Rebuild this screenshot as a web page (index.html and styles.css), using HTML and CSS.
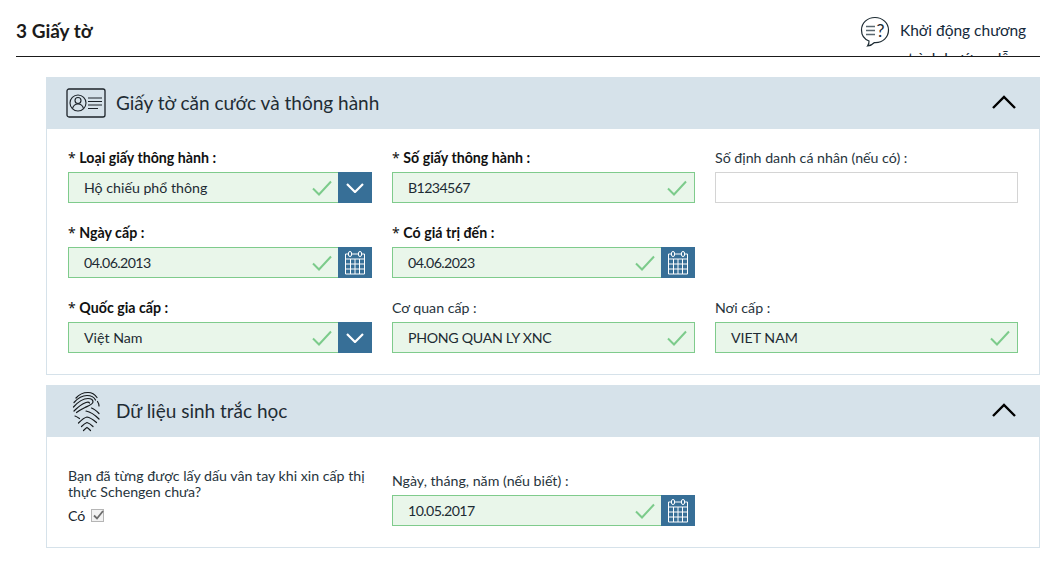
FILE: index.html
```html
<!DOCTYPE html>
<html lang="vi">
<head>
<meta charset="utf-8">
<title>3 Giấy tờ</title>
<link rel="stylesheet" href="styles.css">
</head>
<body>
<svg class="defs" width="0" height="0" aria-hidden="true">
  <defs>
    <symbol id="check" viewBox="0 0 20 16"><path d="M1 8.500l6 6L19 1.500" fill="none" stroke="#7ccb8b" stroke-width="2"/></symbol>
    <symbol id="chev" viewBox="0 0 18 10"><path d="M1 1l8 8 8-8" fill="none" stroke="#fff" stroke-width="2.200"/></symbol>
    <symbol id="cal" viewBox="0 0 22 24">
      <g fill="none" stroke="#fff" stroke-width="1">
        <path d="M4 3.500H1.500v20h19v-20H18M8 3.500h6"/>
        <path d="M1.500 8.500h19M1.500 13.500h19M1.500 18.500h19M6.500 8.500v15M11 8.500v15M15.500 8.500v15"/>
        <rect x="4.500" y="1" width="3" height="5" rx="1.500"/>
        <rect x="14.500" y="1" width="3" height="5" rx="1.500"/>
      </g>
    </symbol>
    <symbol id="up" viewBox="0 0 24 14"><path d="M1 13L12 2l11 11" fill="none" stroke="#000" stroke-width="2.400"/></symbol>
  </defs>
</svg>
<header class="top">
  <h1>3 Giấy tờ</h1>
  <div class="help">
    <svg class="help-icon" viewBox="0 0 30 32" aria-hidden="true">
      <path d="M15 1.500C7.200 1.500 1.500 7 1.500 14c0 5.200 3 9.200 7.500 11 .2 1.800-.4 3.500-1.500 5 3-.3 5.500-2 7-3.500 8.500.5 14-5.500 14-12.500S22.500 1.500 15 1.500z" fill="none" stroke="#1d2b33" stroke-width="1.200"/>
      <path d="M6 10.500h9M6 14.500h9M6 18.500h9" stroke="#5a6870" stroke-width="1.500"/>
      <text x="16.500" y="20.500" class="help-q">?</text>
    </svg>
    <p class="help-text">Khởi động chương trình hướng dẫn</p>
  </div>
</header>

<section class="panel first">
  <div class="panel-head">
    <svg class="id-icon" viewBox="0 0 40 30" aria-hidden="true">
      <rect x="1" y="1" width="38" height="28" rx="2" fill="none" stroke="#1c2329" stroke-width="1.300"/>
      <circle cx="12" cy="15" r="8" fill="none" stroke="#1c2329" stroke-width="1.100"/>
      <circle cx="12" cy="12.500" r="3" fill="none" stroke="#1c2329" stroke-width="1.100"/>
      <path d="M6.500 20.500c1-3.500 3-4.500 5.500-4.500s4.500 1 5.500 4.500" fill="none" stroke="#1c2329" stroke-width="1.100"/>
      <path d="M22 10h14M22 13.500h14M22 17h14M22 20.500h10" stroke="#1c2329" stroke-width="1.200"/>
    </svg>
    <h2>Giấy tờ căn cước và thông hành</h2>
    <svg class="toggle"><use href="#up"/></svg>
  </div>
  <div class="form-grid">
    <div class="field">
      <label><span class="star">*</span> <b>Loại giấy thông hành :</b></label>
      <div class="control ok"><span class="val">Hộ chiếu phổ thông</span><svg class="tick with-btn"><use href="#check"/></svg><span class="btn"><svg class="chev"><use href="#chev"/></svg></span></div>
    </div>
    <div class="field">
      <label><span class="star">*</span> <b>Số giấy thông hành :</b></label>
      <div class="control ok"><span class="val digits">B1234567</span><svg class="tick"><use href="#check"/></svg></div>
    </div>
    <div class="field">
      <label>Số định danh cá nhân (nếu có) :</label>
      <div class="control empty"></div>
    </div>
    <div class="field">
      <label><span class="star">*</span> <b>Ngày cấp :</b></label>
      <div class="control ok"><span class="val digits">04.06.2013</span><svg class="tick with-btn"><use href="#check"/></svg><span class="btn"><svg class="calic"><use href="#cal"/></svg></span></div>
    </div>
    <div class="field">
      <label><span class="star">*</span> <b>Có giá trị đến :</b></label>
      <div class="control ok"><span class="val digits">04.06.2023</span><svg class="tick with-btn"><use href="#check"/></svg><span class="btn"><svg class="calic"><use href="#cal"/></svg></span></div>
    </div>
    <div class="field"></div>
    <div class="field">
      <label><span class="star">*</span> <b>Quốc gia cấp :</b></label>
      <div class="control ok"><span class="val">Việt Nam</span><svg class="tick with-btn"><use href="#check"/></svg><span class="btn"><svg class="chev"><use href="#chev"/></svg></span></div>
    </div>
    <div class="field">
      <label>Cơ quan cấp :</label>
      <div class="control ok"><span class="val caps">PHONG QUAN LY XNC</span><svg class="tick"><use href="#check"/></svg></div>
    </div>
    <div class="field">
      <label>Nơi cấp :</label>
      <div class="control ok"><span class="val">VIET NAM</span><svg class="tick"><use href="#check"/></svg></div>
    </div>
  </div>
</section>

<section class="panel second">
  <div class="panel-head">
    <svg class="fp-icon" viewBox="0 0 30 40" aria-hidden="true">
      <g fill="none" stroke="#15191c" stroke-width="1.200" stroke-linecap="round">
        <path d="M5 7C8 3.500 12 1.500 17 1.500c4 0 7 2 9 5"/>
        <path d="M3 11.500C7 7 11 4.500 16 4.500c4 0 7 1.500 8.500 4.500"/>
        <path d="M2.500 16C7 11 12 7.500 17 7.500c3 0 5 1.500 5 3.500-.5 2.500-5 4-8 5.500-3 1.500-6 3-8.500 5"/>
        <path d="M3 20C7 16 11 13 15 11.500c1.500-.5 3-.5 3.500.5"/>
        <path d="M26.500 10.500c1 1.500 1.500 3 1.500 4.500"/>
        <path d="M20.500 17c3 1 5.500 3.500 7.500 5.500"/>
        <path d="M15 20c5 1 9 4 13 8"/>
        <path d="M4 25c1.500.5 3 1.500 4.500 2.500"/>
        <path d="M7.500 32c3-3 6-5.500 8.500-6 3.500.5 6.500 3 9.500 5.500"/>
        <path d="M10.500 35.500c2-2 4-3.500 5.500-4 2 .5 4 2 6 4"/>
        <path d="M12.500 39.500c1-1 2.500-2.500 3.500-3 1 .5 2.500 2 3.500 3"/>
      </g>
    </svg>
    <h2>Dữ liệu sinh trắc học</h2>
    <svg class="toggle"><use href="#up"/></svg>
  </div>
  <div class="bio">
    <div class="bio-q">
      <p>Bạn đã từng được lấy dấu vân tay khi xin cấp thị thực Schengen chưa?</p>
      <div class="yes"><span>Có</span>
        <svg class="cb" viewBox="0 0 14 14" aria-hidden="true">
          <rect x=".5" y=".5" width="12" height="12" fill="#f2f2f2" stroke="#b5b5b5"/>
          <path d="M3 6.500l3 3L12 2" fill="none" stroke="#6d6d6d" stroke-width="1.800"/>
        </svg>
      </div>
    </div>
    <div class="field bio-date">
      <label>Ngày, tháng, năm (nếu biết) :</label>
      <div class="control ok"><span class="val digits">10.05.2017</span><svg class="tick with-btn"><use href="#check"/></svg><span class="btn"><svg class="calic"><use href="#cal"/></svg></span></div>
    </div>
  </div>
</section>
</body>
</html>
```

FILE: styles.css
```css
* { box-sizing: border-box; }
html, body { margin: 0; padding: 0; }
body {
  width: 1060px;
  height: 568px;
  overflow: hidden;
  background: #fff;
  color: #1a2730;
  font-family: "Lato", "Noto Sans", sans-serif;
  font-size: 14px;
}
.defs { position: absolute; }

.top {
  margin-left: 16px;
  width: 1024px;
  height: 57px;
  border-bottom: 1px solid #1a1a1a;
  display: flex;
  justify-content: space-between;
  overflow: hidden;
}
h1 {
  margin: 19px 0 0;
  font-size: 19px;
  line-height: 24px;
  font-weight: 700;
  color: #1b1b1b;
}
.help {
  width: 180px;
  display: flex;
  align-items: flex-start;
  padding-top: 16px;
}
.help-icon { width: 30px; height: 32px; flex: none; margin-right: 3px; }
.help-q { font-size: 18px; fill: #1d2b33; font-family: "Lato", sans-serif; }
.help-text {
  margin: 0;
  width: 140px;
  flex: none;
  font-size: 15.500px;
  line-height: 28px;
  text-align: center;
  color: #14293a;
}

.panel {
  margin-left: 46px;
  width: 994px;
  border: 1px solid #d6e2ea;
  border-top: 0;
}
.first { margin-top: 20px; height: 298px; }
.second { margin-top: 10px; height: 163px; }
.panel-head {
  height: 52px;
  margin: 0 -1px;
  background: #d6e2ea;
  display: flex;
  align-items: center;
  padding: 0 24px 0 20px;
}
h2 {
  margin: 0 0 2px;
  font-size: 19px;
  font-weight: 400;
  color: #1f2c34;
  flex: 1;
}
.id-icon { width: 40px; height: 30px; margin-right: 10px; flex: none; }
.fp-icon { width: 30px; height: 42px; margin: 0 15px 0 5px; flex: none; }
.toggle { width: 24px; height: 14px; margin-bottom: 3px; flex: none; }

.form-grid {
  display: grid;
  grid-template-columns: 304px 303px 303px;
  column-gap: 20px;
  row-gap: 14px;
  padding: 20px 21px 0;
}
.field { min-height: 61px; }
label {
  display: block;
  height: 23px;
  line-height: 17px;
  font-size: 14.200px;
  color: #27343c;
}
label b { font-weight: 700; color: #111; }
.star { font-family: "Noto Sans", sans-serif; font-size: 14px; color: #111; }
.control {
  height: 31px;
  border: 1px solid #7fcb8c;
  background: #e9f6ea;
  display: flex;
  align-items: center;
  position: relative;
}
.control.empty { border: 1px solid #d4d4d4; background: #fff; }
.val {
  flex: 1;
  padding-left: 15px;
  font-size: 14.200px;
  color: #1d2b33;
}
.digits { letter-spacing: -.6px; }
.caps { letter-spacing: -.3px; }
.tick { width: 20px; height: 16px; margin-right: 7px; flex: none; }
.tick.with-btn { margin-right: 6px; }
.btn {
  width: 34px;
  height: 31px;
  margin: -1px -1px -1px 0;
  background: #376f97;
  display: flex;
  align-items: center;
  justify-content: center;
  flex: none;
}
.chev { width: 18px; height: 10px; }
.calic { width: 22px; height: 25px; }

.bio {
  display: grid;
  grid-template-columns: 304px 303px;
  column-gap: 20px;
  padding: 0 21px;
}
.bio-q { padding-top: 31px; }
.bio-q p { margin: 0; font-size: 14.200px; line-height: 16px; color: #27343c; }
.yes { display: flex; align-items: center; gap: 6px; margin-top: 7px; font-size: 14.200px; line-height: 18px; }
.cb { width: 14px; height: 14px; }
.bio-date { padding-top: 35px; }
```
